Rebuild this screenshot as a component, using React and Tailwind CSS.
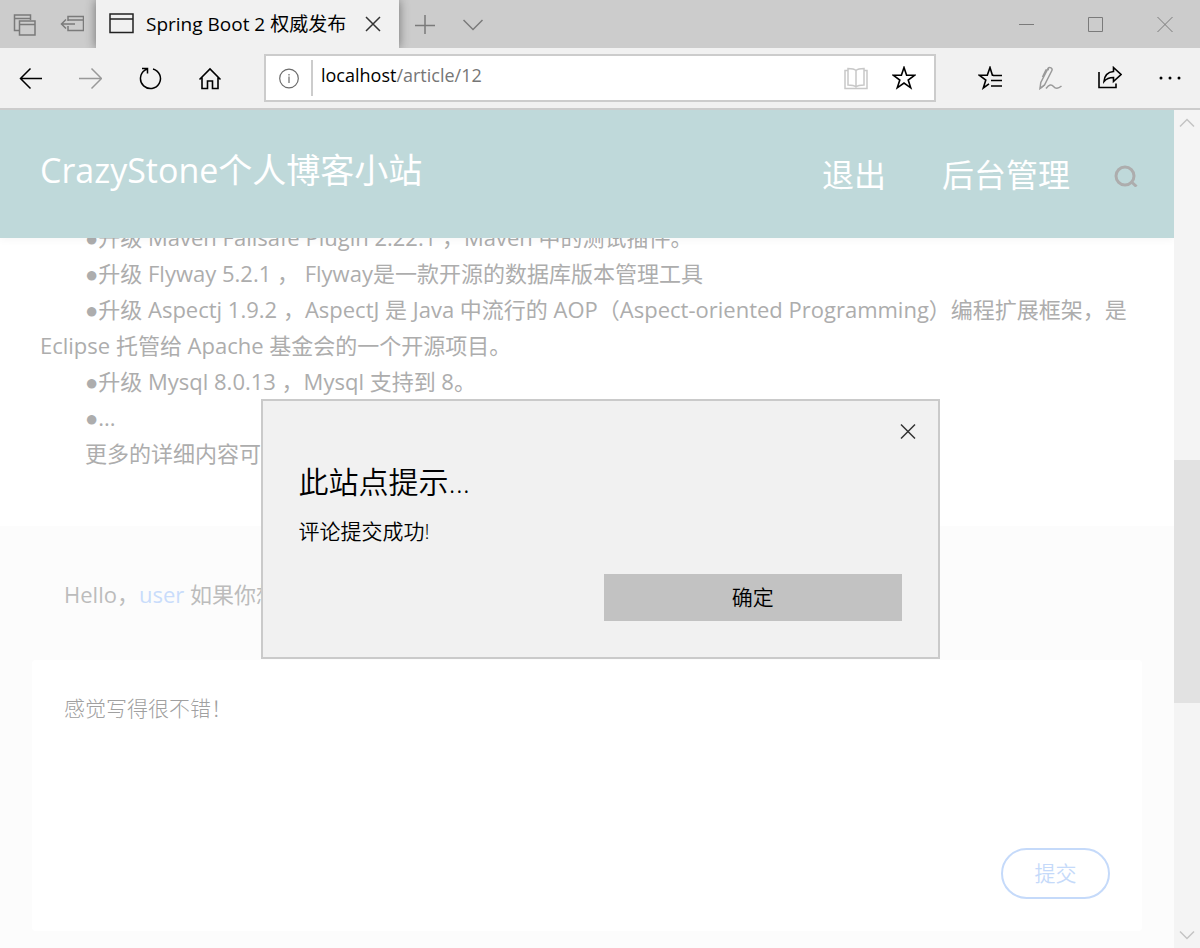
import React, { useState } from 'react';
import clsx from 'clsx';

const Icon = ({ size = 24, strokeWidth = 1.5, className, children }) => (
    <svg
        width={size}
        height={size}
        viewBox={`0 0 ${size} ${size}`}
        fill="none"
        stroke="currentColor"
        strokeWidth={strokeWidth}
        className={className}
        aria-hidden="true"
    >
        {children}
    </svg>
);

const STAR = 'M12 1.5l2.6 7.7h8.2l-6.6 4.8 2.5 7.8-6.7-4.8-6.7 4.8 2.5-7.8-6.6-4.8h8.2z';

const IconButton = ({ label, className, children }) => (
    <button type="button" aria-label={label} className={clsx('flex h-full shrink-0 items-center justify-center', className)}>
        {children}
    </button>
);

const TitleBar = () => (
    <div className="flex h-12 shrink-0 bg-[#cccccc] pr-px text-[#7a7a7a]">
        <IconButton label="标签页" className="w-12">
            <Icon>
                <path d="M8 18.500H2.500v-15.500h16V8M2.500 6.500h16" />
                <path d="M7.500 9h15.500v14H7.500zM7.500 12.500H23" />
            </Icon>
        </IconButton>
        <IconButton label="搁置标签页" className="w-12">
            <Icon>
                <path d="M8 9V4.500h15.500v14H8V14M8 8h15.500M15 12H1.500M6 7.500L1.500 12 6 16.500" />
            </Icon>
        </IconButton>
        <div className="z-10 flex w-[303px] items-center bg-[#f1f1f1] px-3 text-black shadow-[0_0_10px_rgba(0,0,0,0.45)] [clip-path:inset(0_-12px_0_-12px)]">
            <Icon size={26} className="mr-3 text-[#222222]">
                <path d="M2 3h23v18.500H2zM2 8h23" />
            </Icon>
            <span className="flex-1 whitespace-nowrap text-[19px]">Spring Boot 2 权威发布</span>
            <IconButton label="关闭标签页" className="w-7">
                <Icon size={16} className="text-[#333333]">
                    <path d="M1 1l14 14M15 1L1 15" />
                </Icon>
            </IconButton>
        </div>
        <div className="flex pl-0.5">
            <IconButton label="新建标签页" className="w-12">
                <Icon size={20}>
                    <path d="M10 1v19.500M0 11.500h20" />
                </Icon>
            </IconButton>
            <IconButton label="标签页预览" className="w-12">
                <Icon size={20}>
                    <path d="M.5 6l9.500 9.500L19.500 6" />
                </Icon>
            </IconButton>
        </div>
        <div className="flex-1" />
        <IconButton label="最小化" className="w-[69px]">
            <Icon size={16} strokeWidth={1}>
                <path d="M0 8.500h15" />
            </Icon>
        </IconButton>
        <IconButton label="最大化" className="w-[69px]">
            <Icon size={16} strokeWidth={1}>
                <path d="M.5 1.500h14v14H.5z" />
            </Icon>
        </IconButton>
        <IconButton label="关闭" className="w-[69px]">
            <Icon size={16} strokeWidth={1}>
                <path d="M.5 1l15 15M15.500 1l-15 15" />
            </Icon>
        </IconButton>
    </div>
);

const AddressBar = () => (
    <div className="mx-6 flex h-12 flex-1 items-center border-2 border-[#cccccc] bg-white pr-1.5">
        <IconButton label="站点信息" className="w-[45px]">
            <Icon strokeWidth={1.2} className="text-[#6b6b6b]">
                <circle cx="12" cy="12.500" r="9.300" />
                <path d="M12 10.500v6.500M12 8v1.500" />
            </Icon>
        </IconButton>
        <div className="h-9 w-0.5 bg-[#cccccc]" />
        <div className="flex-1 pb-1.5 pl-2 text-[18px]">
            localhost<span className="text-[#767676]">/article/12</span>
        </div>
        <IconButton label="阅读视图" className="w-12">
            <Icon className="text-[#c8c8c8]">
                <path d="M12 4.500C10.500 3 8 2.500 4 2.500v16.500c4 0 6.500.5 8 2 1.500-1.500 4-2 8-2V2.500c-4 0-6.500.5-8 2zM12 4.500V21" />
                <path d="M4 4.500H1v18h22v-18h-3" />
            </Icon>
        </IconButton>
        <IconButton label="添加到收藏夹" className="w-12">
            <Icon strokeWidth={1.6}>
                <path d={STAR} />
            </Icon>
        </IconButton>
    </div>
);

const Toolbar = () => (
    <div className="flex h-[62px] shrink-0 items-center border-b-2 border-[#cccccc] bg-[#f1f1f1]">
        <IconButton label="后退" className="w-[60px]">
            <Icon strokeWidth={1.5}>
                <path d="M24.500 12.500H2.500M12.500 2.500l-10 10 10 10" />
            </Icon>
        </IconButton>
        <IconButton label="前进" className="w-[60px] text-[#999999]">
            <Icon>
                <path d="M1 12.500h22.500M13.500 2.500l10 10-10 10" />
            </Icon>
        </IconButton>
        <IconButton label="刷新" className="w-[60px]">
            <Icon strokeWidth={1.5}>
                <path d="M15 2.900A10 10 0 1 1 7 4.200L9 3M4 2.500h5.500v5" />
            </Icon>
        </IconButton>
        <IconButton label="主页" className="w-[60px]">
            <Icon strokeWidth={1.6}>
                <path d="M1.500 13.500L12 3l10.500 10.500M4 11v11.500h5.500V15h5v7.500H20V11" />
            </Icon>
        </IconButton>
        <AddressBar />
        <IconButton label="收藏夹" className="w-[60px]">
            <Icon strokeWidth={1.6}>
                <path d="M15.500 9.300h-1.100L12 1.500 9.300 9.300H1.500L7.800 14l-2.500 8L11 17.800" />
                <path d="M15 9.500h9M13 14.500h11M13 20h11" />
            </Icon>
        </IconButton>
        <IconButton label="添加笔记" className="w-[60px] text-[#9a9a9a]">
            <Icon>
                <path d="M2 22.500l.8-6L10 2.500c.6-1 2-1.200 3-.7s1.400 1.700.9 2.700L6.500 19zM11 3.500L8 4l-3.500 7" />
                <path d="M2 22.500L6.500 19M8 22.500c3-4 5.500-4.500 7.500-2s4.500 2.500 8-.5" />
            </Icon>
        </IconButton>
        <IconButton label="共享" className="w-[60px]">
            <Icon strokeWidth={1.6}>
                <path d="M1 6v15.500h17v-4" />
                <path d="M15.500 1.500L23 8.500l-7.500 7V11.500c-4 0-7 1-9.500 4 .5-6 4-9.500 9.500-10z" />
            </Icon>
        </IconButton>
        <IconButton label="更多" className="w-[60px]">
            <Icon strokeWidth={0}>
                <g fill="currentColor">
                    <circle cx="3" cy="12" r="1.500" />
                    <circle cx="12" cy="12" r="1.500" />
                    <circle cx="21" cy="12" r="1.500" />
                </g>
            </Icon>
        </IconButton>
    </div>
);

const SiteHeader = () => (
    <header className="z-10 flex h-32 shrink-0 items-center bg-[#bfd9da] pr-9 pl-10 text-white shadow-[0_2px_8px_rgba(0,0,0,0.04)]">
        <h1 className="flex-1 pb-2 text-[34px] whitespace-nowrap">CrazyStone个人博客小站</h1>
        <nav className="flex items-center gap-14 pt-0.5 text-[32px] whitespace-nowrap">
            <a href="#logout">退出</a>
            <a href="#admin">后台管理</a>
        </nav>
        <button type="button" aria-label="搜索" className="ml-11 pt-0.5 text-[#adadad]">
            <Icon strokeWidth={3}>
                <circle cx="11" cy="13" r="9" />
                <path d="M17 18.500l5.500 5" />
            </Icon>
        </button>
    </header>
);

const Bullet = () => <span className="font-['Liberation_Sans'] leading-none">●</span>;

const Article = () => (
    <article className="-mt-[19px] shrink-0 px-10 pb-[55px] text-[22px] leading-9 text-[#adadad]">
        <p className="indent-[45px]"><Bullet />升级 Maven Failsafe Plugin 2.22.1 ，Maven 中的测试插件。</p>
        <p className="indent-[45px]"><Bullet />升级 Flyway 5.2.1 ， Flyway是一款开源的数据库版本管理工具</p>
        <p className="indent-[45px]">
            <Bullet />升级 Aspectj 1.9.2 ，AspectJ 是 Java 中流行的 AOP（Aspect-oriented Programming）编程扩展框架，是 Eclipse 托管给 Apache 基金会的一个开源项目。
        </p>
        <p className="indent-[45px]"><Bullet />升级 Mysql 8.0.13 ，Mysql 支持到 8。</p>
        <p className="indent-[45px]"><Bullet />...</p>
        <p className="indent-[45px]">更多的详细内容可</p>
    </article>
);

const CommentForm = () => {
    const [comment, setComment] = useState('感觉写得很不错！');

    return (
        <section className="flex-1 bg-[#fcfcfc] px-8 pt-[50px]">
            <p className="pl-8 text-[22px] leading-9 text-[#bcbcbc]">
                Hello，<a href="#user" className="text-[#c9dcfb]">user</a> 如果你想
            </p>
            <form className="mt-12 flex h-[271px] flex-col rounded bg-white p-8" onSubmit={(e) => e.preventDefault()}>
                <textarea
                    aria-label="评论"
                    className="w-full flex-1 resize-none text-[21px] leading-8 font-light text-[#a0a0a0] outline-none"
                    value={comment}
                    onChange={(e) => setComment(e.target.value)}
                />
                <button type="submit" className="h-[51px] w-[109px] self-end rounded-full border-2 border-[#c5dafa] text-[21px] font-[350] text-[#c5dafa]">
                    提交
                </button>
            </form>
        </section>
    );
};

const Scrollbar = () => (
    <div className="flex w-[26px] shrink-0 flex-col bg-[#f4f4f4] text-[#c4c4c4]">
        <div className="flex h-[26px] items-center justify-center">
            <Icon size={16}>
                <path d="M1 11.500l7-7 7 7" />
            </Icon>
        </div>
        <div className="flex-[324]" />
        <div className="flex-[243] bg-[#e2e2e2]" />
        <div className="flex-[219]" />
        <div className="flex h-[26px] items-center justify-center">
            <Icon size={16}>
                <path d="M1 4.500l7 7 7-7" />
            </Icon>
        </div>
    </div>
);

const AlertDialog = ({ title, message, onClose }) => (
    <div className="absolute inset-0 z-20 flex items-center justify-center">
        <div role="alertdialog" aria-label={title} className="relative w-[679px] border-2 border-[#cacaca] bg-[#f1f1f1] px-9 pt-[60px] pb-9 font-[350] text-black">
            <button type="button" aria-label="关闭对话框" className="absolute top-4 right-4 flex size-7 items-center justify-center" onClick={onClose}>
                <Icon size={16} className="text-[#333333]">
                    <path d="M1 1.500l14 14M15 1.500l-14 14" />
                </Icon>
            </button>
            <h2 className="text-[30px] leading-[42px]">{title}</h2>
            <p className="mt-3 text-[21px] leading-8">{message}</p>
            <div className="mt-[27px] grid grid-cols-2 gap-2">
                <button type="button" className="col-start-2 h-[47px] bg-[#c2c2c2] text-[21px]" onClick={onClose}>
                    确定
                </button>
            </div>
        </div>
    </div>
);

export default function App() {
    const [showAlert, setShowAlert] = useState(true);

    return (
        <div className="flex h-screen flex-col overflow-hidden bg-white font-['Open_Sans','Noto_Sans_CJK_SC',sans-serif]">
            <TitleBar />
            <Toolbar />
            <div className="relative flex min-h-0 flex-1">
                <main className="flex min-w-0 flex-1 flex-col overflow-hidden">
                    <SiteHeader />
                    <Article />
                    <CommentForm />
                </main>
                <Scrollbar />
                {showAlert && (
                    <AlertDialog title="此站点提示..." message="评论提交成功!" onClose={() => setShowAlert(false)} />
                )}
            </div>
        </div>
    );
}
